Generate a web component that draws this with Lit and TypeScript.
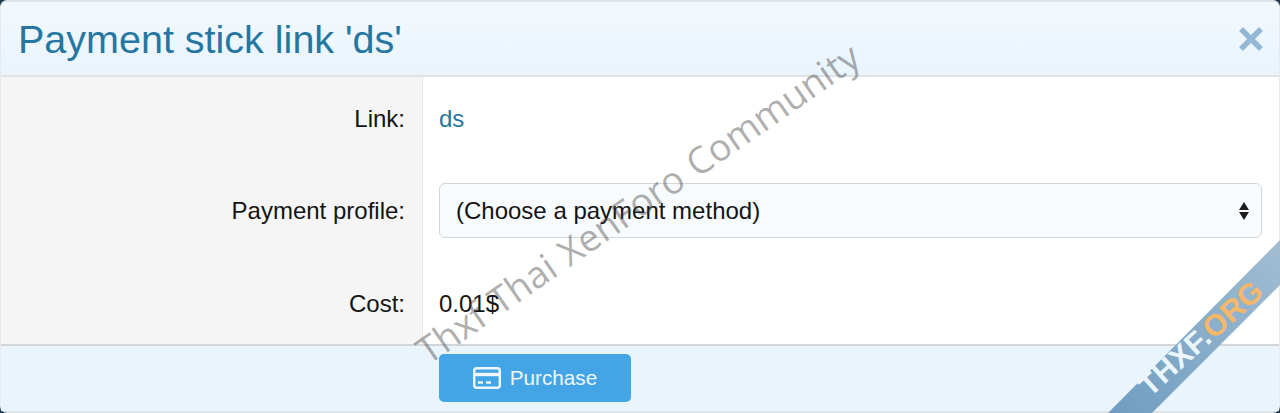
import { LitElement, html, css } from 'lit'
import { customElement } from 'lit/decorators.js'

@customElement('app-root')
export class AppRoot extends LitElement {
  static override styles = css`
    :host {
      display: block;
      position: relative;
      width: 1280px;
      height: 413px;
      overflow: hidden;
      background: #1f3b52;
      font-family: 'Liberation Sans', Arial, sans-serif;
      color: #141414;
    }

    .overlay {
      height: 413px;
      box-sizing: border-box;
      display: flex;
      flex-direction: column;
      background: #fff;
      border: 1px solid #e6eaee;
      border-top: 2px solid #dfe3e8;
      border-bottom: 2px solid #dfe3e8;
      border-radius: 7px;
    }

    .header {
      height: 75px;
      flex-shrink: 0;
      box-sizing: border-box;
      display: flex;
      align-items: center;
      justify-content: space-between;
      padding: 0 15px 0 17px;
      background: linear-gradient(#f3f9fe, #e9f4fd);
      border-bottom: 2px solid #dfe3e6;
      border-radius: 6px 6px 0 0;
    }
    .title {
      font-size: 39.5px;
      line-height: 46px;
      color: #2577a1;
    }
    .close {
      display: block;
      width: 26px;
      height: 26px;
    }

    .body {
      flex: 1;
      display: grid;
      grid-template-columns: 422px 1fr;
      grid-template-rows: 84px 99px 84px;
    }
    .label {
      background: #f5f5f5;
      border-right: 1px solid #e6e6e6;
      box-sizing: border-box;
      display: flex;
      align-items: center;
      justify-content: flex-end;
      padding-right: 17px;
      font-size: 24px;
    }
    .value {
      display: flex;
      align-items: center;
      padding: 0 17px 0 16px;
      font-size: 24px;
    }
    .cost {
      padding-top: 4px;
    }
    .link {
      color: #2577a1;
    }
    .select {
      flex: 1;
      height: 55px;
      box-sizing: border-box;
      display: flex;
      align-items: center;
      justify-content: space-between;
      padding: 0 11px 0 16px;
      background: #f8fbfe;
      border: 1px solid #d3d6d9;
      border-radius: 6px;
      font-size: 24px;
    }
    .arrows {
      display: block;
      width: 12px;
      height: 20px;
    }

    .footer {
      flex: 1;
      display: flex;
      align-items: flex-start;
      padding: 8px 0 0 438px;
      background: #e9f4fd;
      border-top: 2px solid #d3d6d9;
    }
    .button {
      width: 192px;
      height: 48px;
      display: flex;
      align-items: center;
      justify-content: center;
      gap: 9px;
      background: #44a5e6;
      border-radius: 5px;
      color: #eef7fd;
      font-size: 20.7px;
    }
    .card {
      display: block;
      width: 28px;
      height: 22px;
    }

    .watermark {
      position: absolute;
      left: 372px;
      top: 178px;
      width: 540px;
      transform: rotate(-34.8deg);
      transform-origin: 50% 50%;
      font-family: 'Open Sans', sans-serif;
      font-size: 37.2px;
      word-spacing: 2px;
      line-height: 44px;
      white-space: nowrap;
      color: rgba(60, 60, 60, 0.42);
      pointer-events: none;
    }

    .ribbon {
      position: absolute;
      right: 0;
      bottom: 0;
      display: block;
      width: 172px;
      height: 173px;
    }
    .ribbon-text {
      position: absolute;
      left: 1122px;
      top: 318px;
      width: 165px;
      transform: rotate(-42deg);
      font-family: 'Liberation Sans', Arial, sans-serif;
      font-weight: 700;
      font-size: 30px;
      line-height: 34px;
      letter-spacing: 0.5px;
      white-space: nowrap;
      color: #eaf5fc;
    }
    .ribbon-text span {
      color: #f6b868;
    }
  `

  override render() {
    return html`
      <div class="overlay">
        <div class="header">
          <div class="title">Payment stick link 'ds'</div>
          <svg class="close" viewBox="0 0 26 26">
            <path d="M3 3 L23 23 M23 3 L3 23" stroke="#93b8d5" stroke-width="5.5" fill="none" />
          </svg>
        </div>
        <div class="body">
          <div class="label">Link:</div>
          <div class="value"><span class="link">ds</span></div>
          <div class="label">Payment profile:</div>
          <div class="value">
            <div class="select">
              <span>(Choose a payment method)</span>
              <svg class="arrows" viewBox="0 0 12 20">
                <path d="M6 1 L11 9 H1 Z M1 11 H11 L6 19 Z" fill="#1c1c1c" />
              </svg>
            </div>
          </div>
          <div class="label cost">Cost:</div>
          <div class="value cost">0.01$</div>
        </div>
        <div class="footer">
          <div class="button">
            <svg class="card" viewBox="0 0 28 22">
              <rect x="1.2" y="1.2" width="25.6" height="19.6" rx="2.5" fill="none" stroke="currentColor" stroke-width="2.4" />
              <path d="M1 7.5 H27" stroke="currentColor" stroke-width="3.4" />
              <path d="M5 15.5 H10 M13 15.5 H18" stroke="currentColor" stroke-width="2.4" />
            </svg>
            Purchase
          </div>
        </div>
      </div>
      <div class="watermark">Thxf Thai XenForo Community</div>
      <svg class="ribbon" viewBox="0 0 172 173">
        <defs>
          <linearGradient id="rb" x1="1" y1="0" x2="0" y2="1">
            <stop offset="0" stop-color="#a2bdd2" />
            <stop offset="1" stop-color="#6f9dc1" />
          </linearGradient>
        </defs>
        <polygon points="172,0 172,45 44,173 0,173" fill="url(#rb)" />
      </svg>
      <div class="ribbon-text">THXF.<span>ORG</span></div>
    `
  }
}

declare global {
  interface HTMLElementTagNameMap {
    'app-root': AppRoot
  }
}
